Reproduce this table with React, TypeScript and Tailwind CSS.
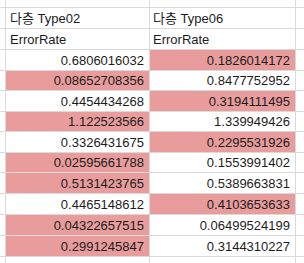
import React from "react";

const rows: { a: string; ah: boolean; b: string; bh: boolean; h: string }[] = [
  { a: "0.6806016032", ah: false, b: "0.1826014172", bh: true, h: "h-[21px]" },
  { a: "0.08652708356", ah: true, b: "0.8477752952", bh: false, h: "h-[20px]" },
  { a: "0.4454434268", ah: false, b: "0.3194111495", bh: true, h: "h-[21px]" },
  { a: "1.122523566", ah: true, b: "1.339949426", bh: false, h: "h-[20px]" },
  { a: "0.3326431675", ah: false, b: "0.2295531926", bh: true, h: "h-[21px]" },
  { a: "0.02595661788", ah: true, b: "0.1553991402", bh: false, h: "h-[20px]" },
  { a: "0.5131423765", ah: true, b: "0.5389663831", bh: false, h: "h-[21px]" },
  { a: "0.4465148612", ah: false, b: "0.4103653633", bh: true, h: "h-[21px]" },
  { a: "0.04322657515", ah: true, b: "0.06499524199", bh: false, h: "h-[21px]" },
  { a: "0.2991245847", ah: true, b: "0.3144310227", bh: false, h: "h-[21px]" },
];

function Row({
  h,
  a,
  b,
  ah,
  bh,
  num,
}: {
  h: string;
  a?: string;
  b?: string;
  ah?: boolean;
  bh?: boolean;
  num?: boolean;
}) {
  const align = num ? "justify-end pr-[5px]" : "justify-start";
  return (
    <div className={`flex ${h} border-b border-[#dadada]`}>
      <div className="w-[6px] shrink-0 border-r border-[#dadada]" />
      <div
        className={`w-[144px] shrink-0 border-r border-[#dadada] flex items-center ${align} ${
          num ? "" : "pl-[4px]"
        } ${ah ? "bg-[#e89c9c]" : ""}`}
      >
        {a}
      </div>
      <div
        className={`w-[146px] shrink-0 border-r border-[#dadada] flex items-center ${align} ${
          num ? "" : "pl-[3px]"
        } ${bh ? "bg-[#e89c9c]" : ""}`}
      >
        {b}
      </div>
      <div className="flex-1" />
    </div>
  );
}

export default function App() {
  return (
    <div
      className="w-[304px] h-[263px] overflow-hidden bg-white text-[13px] text-[#1c1c1c] leading-none"
      style={{ fontFamily: '"Liberation Sans", "Noto Sans CJK KR", sans-serif' }}
    >
      <Row h="h-[8px]" />
      <Row h="h-[21px]" a="다층 Type02" b="다층 Type06" />
      <Row h="h-[21px]" a="ErrorRate" b="ErrorRate" />
      {rows.map((r, i) => (
        <Row key={i} h={r.h} a={r.a} b={r.b} ah={r.ah} bh={r.bh} num />
      ))}
      <Row h="h-[21px]" />
    </div>
  );
}
